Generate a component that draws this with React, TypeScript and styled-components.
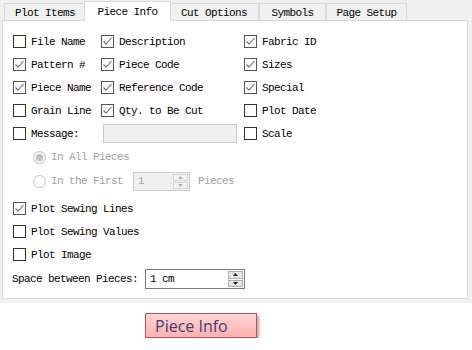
import React from 'react';
import styled, { createGlobalStyle } from 'styled-components';

const GlobalStyle = createGlobalStyle`
  body {
    margin: 0;
    background: #ffffff;
    font-family: "Liberation Mono", "DejaVu Sans Mono", monospace;
  }
`;

const Dialog = styled.div`
  width: 472px;
  height: 303px;
  background: #f0f0f0;
  padding-top: 1px;
  box-sizing: border-box;
`;

const TabStrip = styled.div`
  display: flex;
  align-items: flex-end;
  height: 20px;
  padding-left: 4px;
`;

const Tab = styled.div<{ $w: number; $active?: boolean }>`
  position: relative;
  z-index: ${(p) => (p.$active ? 2 : 1)};
  box-sizing: border-box;
  width: ${(p) => p.$w}px;
  height: ${(p) => (p.$active ? 20 : 18)}px;
  margin: ${(p) => (p.$active ? '0 -2px' : '0')};
  border: 1px solid #d9d9d9;
  border-bottom: none;
  background: ${(p) => (p.$active ? '#ffffff' : '#f0f0f0')};
  display: flex;
  align-items: center;
  justify-content: center;
  padding-top: ${(p) => (p.$active ? 0 : 1)}px;
  font-size: 11px;
  letter-spacing: -0.6px;
  color: #000;
  white-space: nowrap;
`;

const Panel = styled.div`
  position: relative;
  z-index: 1;
  margin-top: -1px;
  margin-left: 2px;
  width: 466px;
  height: 279px;
  box-sizing: border-box;
  border: 1px solid #d9d9d9;
  background: #ffffff;
  padding: 9px 0 0 10px;
  display: flex;
  flex-direction: column;
`;

const CheckGrid = styled.div`
  display: grid;
  grid-template-columns: 88px 143px 1fr;
  grid-auto-rows: 23px;
`;

const Item = styled.label<{ $dim?: boolean }>`
  display: flex;
  align-items: center;
  gap: 5px;
  font-size: 11px;
  letter-spacing: -0.6px;
  color: ${(p) => (p.$dim ? '#a0a0a0' : '#000')};
  white-space: nowrap;
`;

const Box = styled.span<{ $on?: boolean }>`
  width: 13px;
  height: 13px;
  box-sizing: border-box;
  border: 1px solid ${(p) => (p.$on ? '#555' : '#333')};
  background: #fff;
  display: flex;
  align-items: center;
  justify-content: center;
  flex-shrink: 0;
`;

const Radio = styled.span<{ $on?: boolean }>`
  width: 13px;
  height: 13px;
  box-sizing: border-box;
  border-radius: 50%;
  border: 1px solid #c4c4c4;
  background: ${(p) => (p.$on ? '#f4f4f4' : '#fff')};
  display: flex;
  align-items: center;
  justify-content: center;
  flex-shrink: 0;
  &::after {
    content: '';
    width: 7px;
    height: 7px;
    border-radius: 50%;
    background: ${(p) => (p.$on ? '#c0c0c0' : 'transparent')};
  }
`;

const Field = styled.div`
  margin-left: 2px;
  width: 134px;
  height: 19px;
  align-self: center;
  box-sizing: border-box;
  border: 1px solid #cccccc;
  background: #f0f0f0;
`;

const RadioGroup = styled.div`
  display: flex;
  flex-direction: column;
  padding-left: 20px;
  margin-bottom: 4px;
`;

const Row = styled.div<{ $h?: number }>`
  display: flex;
  align-items: center;
  height: ${(p) => p.$h ?? 23}px;
  font-size: 11px;
  letter-spacing: -0.6px;
  white-space: nowrap;
`;

const Spin = styled.div<{ $w: number; $h: number; $off?: boolean }>`
  display: flex;
  align-items: stretch;
  box-sizing: border-box;
  width: ${(p) => p.$w}px;
  height: ${(p) => p.$h}px;
  border: 1px solid ${(p) => (p.$off ? '#cccccc' : '#7a7a7a')};
  background: ${(p) => (p.$off ? '#f0f0f0' : '#ffffff')};
  color: ${(p) => (p.$off ? '#a0a0a0' : '#000')};
  font-size: 11px;
  letter-spacing: -0.6px;
`;

const SpinText = styled.span`
  flex: 1;
  display: flex;
  align-items: center;
  padding-left: 4px;
`;

const SpinButtons = styled.div`
  width: 15px;
  display: flex;
  flex-direction: column;
  padding: 1px;
  gap: 1px;
`;

const SpinBtn = styled.div<{ $off?: boolean }>`
  flex: 1;
  background: ${(p) => (p.$off ? '#f4f4f4' : '#e6e6e6')};
  border: 1px solid ${(p) => (p.$off ? '#d4d4d4' : '#adadad')};
  display: flex;
  align-items: center;
  justify-content: center;
`;

const Gap = styled.span<{ $w: number }>`
  display: inline-block;
  width: ${(p) => p.$w}px;
`;

const Caption = styled.div`
  margin: 10px 0 0 145px;
  width: 112px;
  height: 25px;
  box-sizing: border-box;
  border: 1px solid #c0504d;
  background: linear-gradient(#ffd4d4, #ffb0b0);
  box-shadow: 2px 2px 3px rgba(0, 0, 0, 0.35);
  font-family: "Open Sans", "Noto Sans", sans-serif;
  font-size: 16px;
  color: #3c3c78;
  display: flex;
  align-items: center;
  padding-left: 9px;
`;

const Tick = () => (
  <svg width="11" height="11" viewBox="0 0 11 11">
    <path d="M1.5 5.5 L4 8 L9.5 2" fill="none" stroke="#6a6a6a" strokeWidth="1.1" />
  </svg>
);

const Arrow = ({ up, off }: { up?: boolean; off?: boolean }) => (
  <svg width="5" height="3" viewBox="0 0 5 3">
    <path d={up ? 'M0 3 L2.5 0 L5 3 Z' : 'M0 0 L2.5 3 L5 0 Z'} fill={off ? '#b0b0b0' : '#202020'} />
  </svg>
);

const Check = ({ label, on, dim }: { label: string; on?: boolean; dim?: boolean }) => (
  <Item $dim={dim}>
    <Box $on={on}>{on && <Tick />}</Box>
    {label}
  </Item>
);

const Spinner = ({ value, w, h, off }: { value: string; w: number; h: number; off?: boolean }) => (
  <Spin $w={w} $h={h} $off={off}>
    <SpinText>{value}</SpinText>
    <SpinButtons>
      <SpinBtn $off={off}><Arrow up off={off} /></SpinBtn>
      <SpinBtn $off={off}><Arrow off={off} /></SpinBtn>
    </SpinButtons>
  </Spin>
);

const tabs = [
  { label: 'Plot Items', w: 82 },
  { label: 'Piece Info', w: 87, active: true },
  { label: 'Cut Options', w: 90 },
  { label: 'Symbols', w: 67 },
  { label: 'Page Setup', w: 81 },
];

const grid: Array<[string, boolean]> = [
  ['File Name', false], ['Description', true], ['Fabric ID', true],
  ['Pattern #', true], ['Piece Code', true], ['Sizes', true],
  ['Piece Name', true], ['Reference Code', true], ['Special', true],
  ['Grain Line', false], ['Qty. to Be Cut', true], ['Plot Date', false],
];

export default function App() {
  return (
    <>
      <GlobalStyle />
      <Dialog>
        <TabStrip>
          {tabs.map((t) => (
            <Tab key={t.label} $w={t.w} $active={t.active}>{t.label}</Tab>
          ))}
        </TabStrip>
        <Panel>
          <CheckGrid>
            {grid.map(([label, on]) => (
              <Check key={label} label={label} on={on} />
            ))}
            <Check label="Message:" />
            <Field />
            <Check label="Scale" />
          </CheckGrid>
          <RadioGroup>
            <Row $h={24}>
              <Item $dim>
                <Radio $on />
                In All Pieces
              </Item>
            </Row>
            <Row $h={24}>
              <Item $dim>
                <Radio />
                In the First
              </Item>
              <Gap $w={10} />
              <Spinner value="1" w={57} h={19} off />
              <Gap $w={8} />
              <Item $dim>Pieces</Item>
            </Row>
          </RadioGroup>
          <Row><Check label="Plot Sewing Lines" on /></Row>
          <Row><Check label="Plot Sewing Values" /></Row>
          <Row><Check label="Plot Image" /></Row>
          <Row $h={26}>
            <Item style={{ marginLeft: -1 }}>Space between Pieces:</Item>
            <Gap $w={7} />
            <Spinner value="1 cm" w={100} h={20} />
          </Row>
        </Panel>
      </Dialog>
      <Caption>Piece Info</Caption>
    </>
  );
}
